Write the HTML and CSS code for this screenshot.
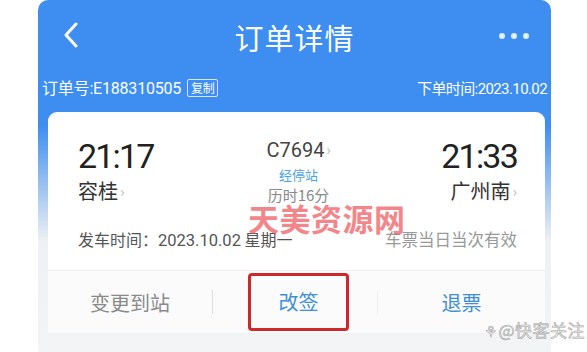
FILE: index.html
```html
<!DOCTYPE html>
<html lang="zh">
<head>
<meta charset="utf-8">
<link rel="stylesheet" href="styles.css">
</head>
<body>
<div class="screen">
  <div class="header">
    <svg class="back" width="16" height="26" viewBox="0 0 16 26"><path d="M13 2 L3 13 L13 24" fill="none" stroke="#fff" stroke-width="3" stroke-linecap="round" stroke-linejoin="round"/></svg>
    <div class="title">订单详情</div>
    <div class="more"><span></span><span></span><span></span></div>
  </div>
  <div class="order-row">
    <div class="order-no">订单号:E188310505 <span class="copy">复制</span></div>
    <div class="order-time">下单时间:2023.10.02</div>
  </div>
  <div class="card">
    <div class="trip">
      <div class="end">
        <div class="time">21:17</div>
        <div class="station">容桂<span class="arr">›</span></div>
      </div>
      <div class="mid">
        <div class="train">C7694<span class="arr">›</span></div>
        <div class="stops">经停站</div>
        <div class="dur">历时16分</div>
      </div>
      <div class="end right">
        <div class="time">21:33</div>
        <div class="station">广州南<span class="arr">›</span></div>
      </div>
    </div>
    <div class="info">
      <div class="dep">发车时间：<span class="num">2023.10.02</span> 星期一</div>
      <div class="valid">车票当日当次有效</div>
    </div>
    <div class="wm">天美资源网</div>
  </div>
  <div class="actions">
    <div class="act gray">变更到站</div>
    <div class="sep"></div>
    <div class="act blue boxed">改签</div>
    <div class="sep faint"></div>
    <div class="act blue">退票</div>
  </div>
</div>
<div class="wm2"><span class="wm2-icon">⚘</span>@快客关注</div>
</body>
</html>
```
FILE: styles.css
```css
* { box-sizing: border-box; }
html, body { margin: 0; padding: 0; }
body {
  width: 587px; height: 352px; overflow: hidden; position: relative;
  background: #fff;
  font-family: "Noto Sans CJK SC", "Noto Sans", sans-serif;
}
.screen {
  margin-left: 38px; width: 513px; height: 352px;
  border-radius: 10px 10px 0 0; overflow: hidden;
  background: linear-gradient(#3d8ef0 0, #3d8ef0 125px, #eef0f3 240px, #f3f4f6 100%);
  display: flex; flex-direction: column;
}
.header {
  height: 70px; display: flex; align-items: center; justify-content: space-between;
  padding: 0 22px 0 25px; position: relative;
}
.title {
  position: absolute; left: 0; right: 0; top: 2px; text-align: center;
  color: #fff; font-size: 29px; line-height: 70px; pointer-events: none; letter-spacing: 1px;
}
.more { display: flex; gap: 6px; margin-top: 2px; }
.more span { width: 6px; height: 6px; border-radius: 50%; background: #dff0ff; }
.order-row {
  height: 42px; display: flex; justify-content: space-between; align-items: center;
  padding: 0 4px 8px 4px; color: #fff;
  font-family: "Roboto", "Noto Sans CJK SC", sans-serif;
}
.order-no { font-size: 16px; letter-spacing: -0.2px; }
.order-time { font-size: 15px; letter-spacing: -0.6px; }
.copy {
  display: inline-block; font-size: 12px; line-height: 16px; padding: 0 3px;
  border: 1px solid rgba(255,255,255,0.8); border-radius: 2px; margin-left: 2px;
  vertical-align: 1px; font-family: "Noto Sans CJK SC", sans-serif;
}
.card {
  margin: 0 6px 0 10px; background: #fff; border-radius: 9px 9px 0 0;
  padding: 24px 28px 0 30px; height: 158px; position: relative;
}
.trip { display: flex; justify-content: space-between; }
.end { display: flex; flex-direction: column; }
.end.right { align-items: flex-end; }
.time {
  font-family: "Roboto", sans-serif; font-size: 34px; line-height: 40px; color: #222;
  letter-spacing: -1.8px;
}
.station { font-size: 20px; line-height: 26px; color: #333; margin-top: 2px; }
.arr { color: #bbb; font-size: 15px; margin-left: 2px; position: relative; top: -2px; }
.mid { display: flex; flex-direction: column; align-items: center; padding-top: 1px; margin-left: 2px; }
.train { font-family: "Roboto", sans-serif; font-size: 20px; line-height: 26px; color: #444; }
.train .arr { font-size: 14px; }
.stops { font-size: 13px; line-height: 20px; color: #4aa3e0; }
.dur { font-size: 15px; line-height: 20px; color: #888; }
.info {
  display: flex; justify-content: space-between; margin-top: 24px;
  font-size: 16px; line-height: 18px;
}
.dep { color: #555; }
.dep .num { font-family: "Roboto", sans-serif; font-size: 16.5px; }
.valid { color: #999; font-size: 16.5px; }
.wm {
  position: absolute; left: 200px; top: 93px; font-size: 31px; line-height: 25px;
  color: rgba(238, 80, 85, 0.7); font-weight: 700; letter-spacing: 0.5px;
}
.actions {
  margin: 0 6px 0 10px; height: 63px; background: #fbfbfb;
  display: flex; align-items: center; border-top: 1px solid #f0f0f0;
}
.act { font-size: 20px; text-align: center; }
.gray { color: #8a8a8a; width: 164px; }
.blue { color: #3d8fd6; }
.boxed {
  width: 101px; height: 58px; line-height: 52px; margin-left: 35px;
  border: 3px solid #cc2a2a; border-radius: 4px;
}
.sep { width: 1px; height: 24px; background: #ddd; }
.sep.faint { background: #f0f0f0; margin-left: 28px; }
.act:last-child { flex: 1; padding-left: 0; }
.wm2 {
  position: absolute; right: 2px; bottom: 10px; font-size: 17px; color: #ececec;
  -webkit-text-stroke: 0.6px #a8a8a8; letter-spacing: 0.5px;
}
.wm2-icon { font-size: 15px; margin-right: 1px; }
```
